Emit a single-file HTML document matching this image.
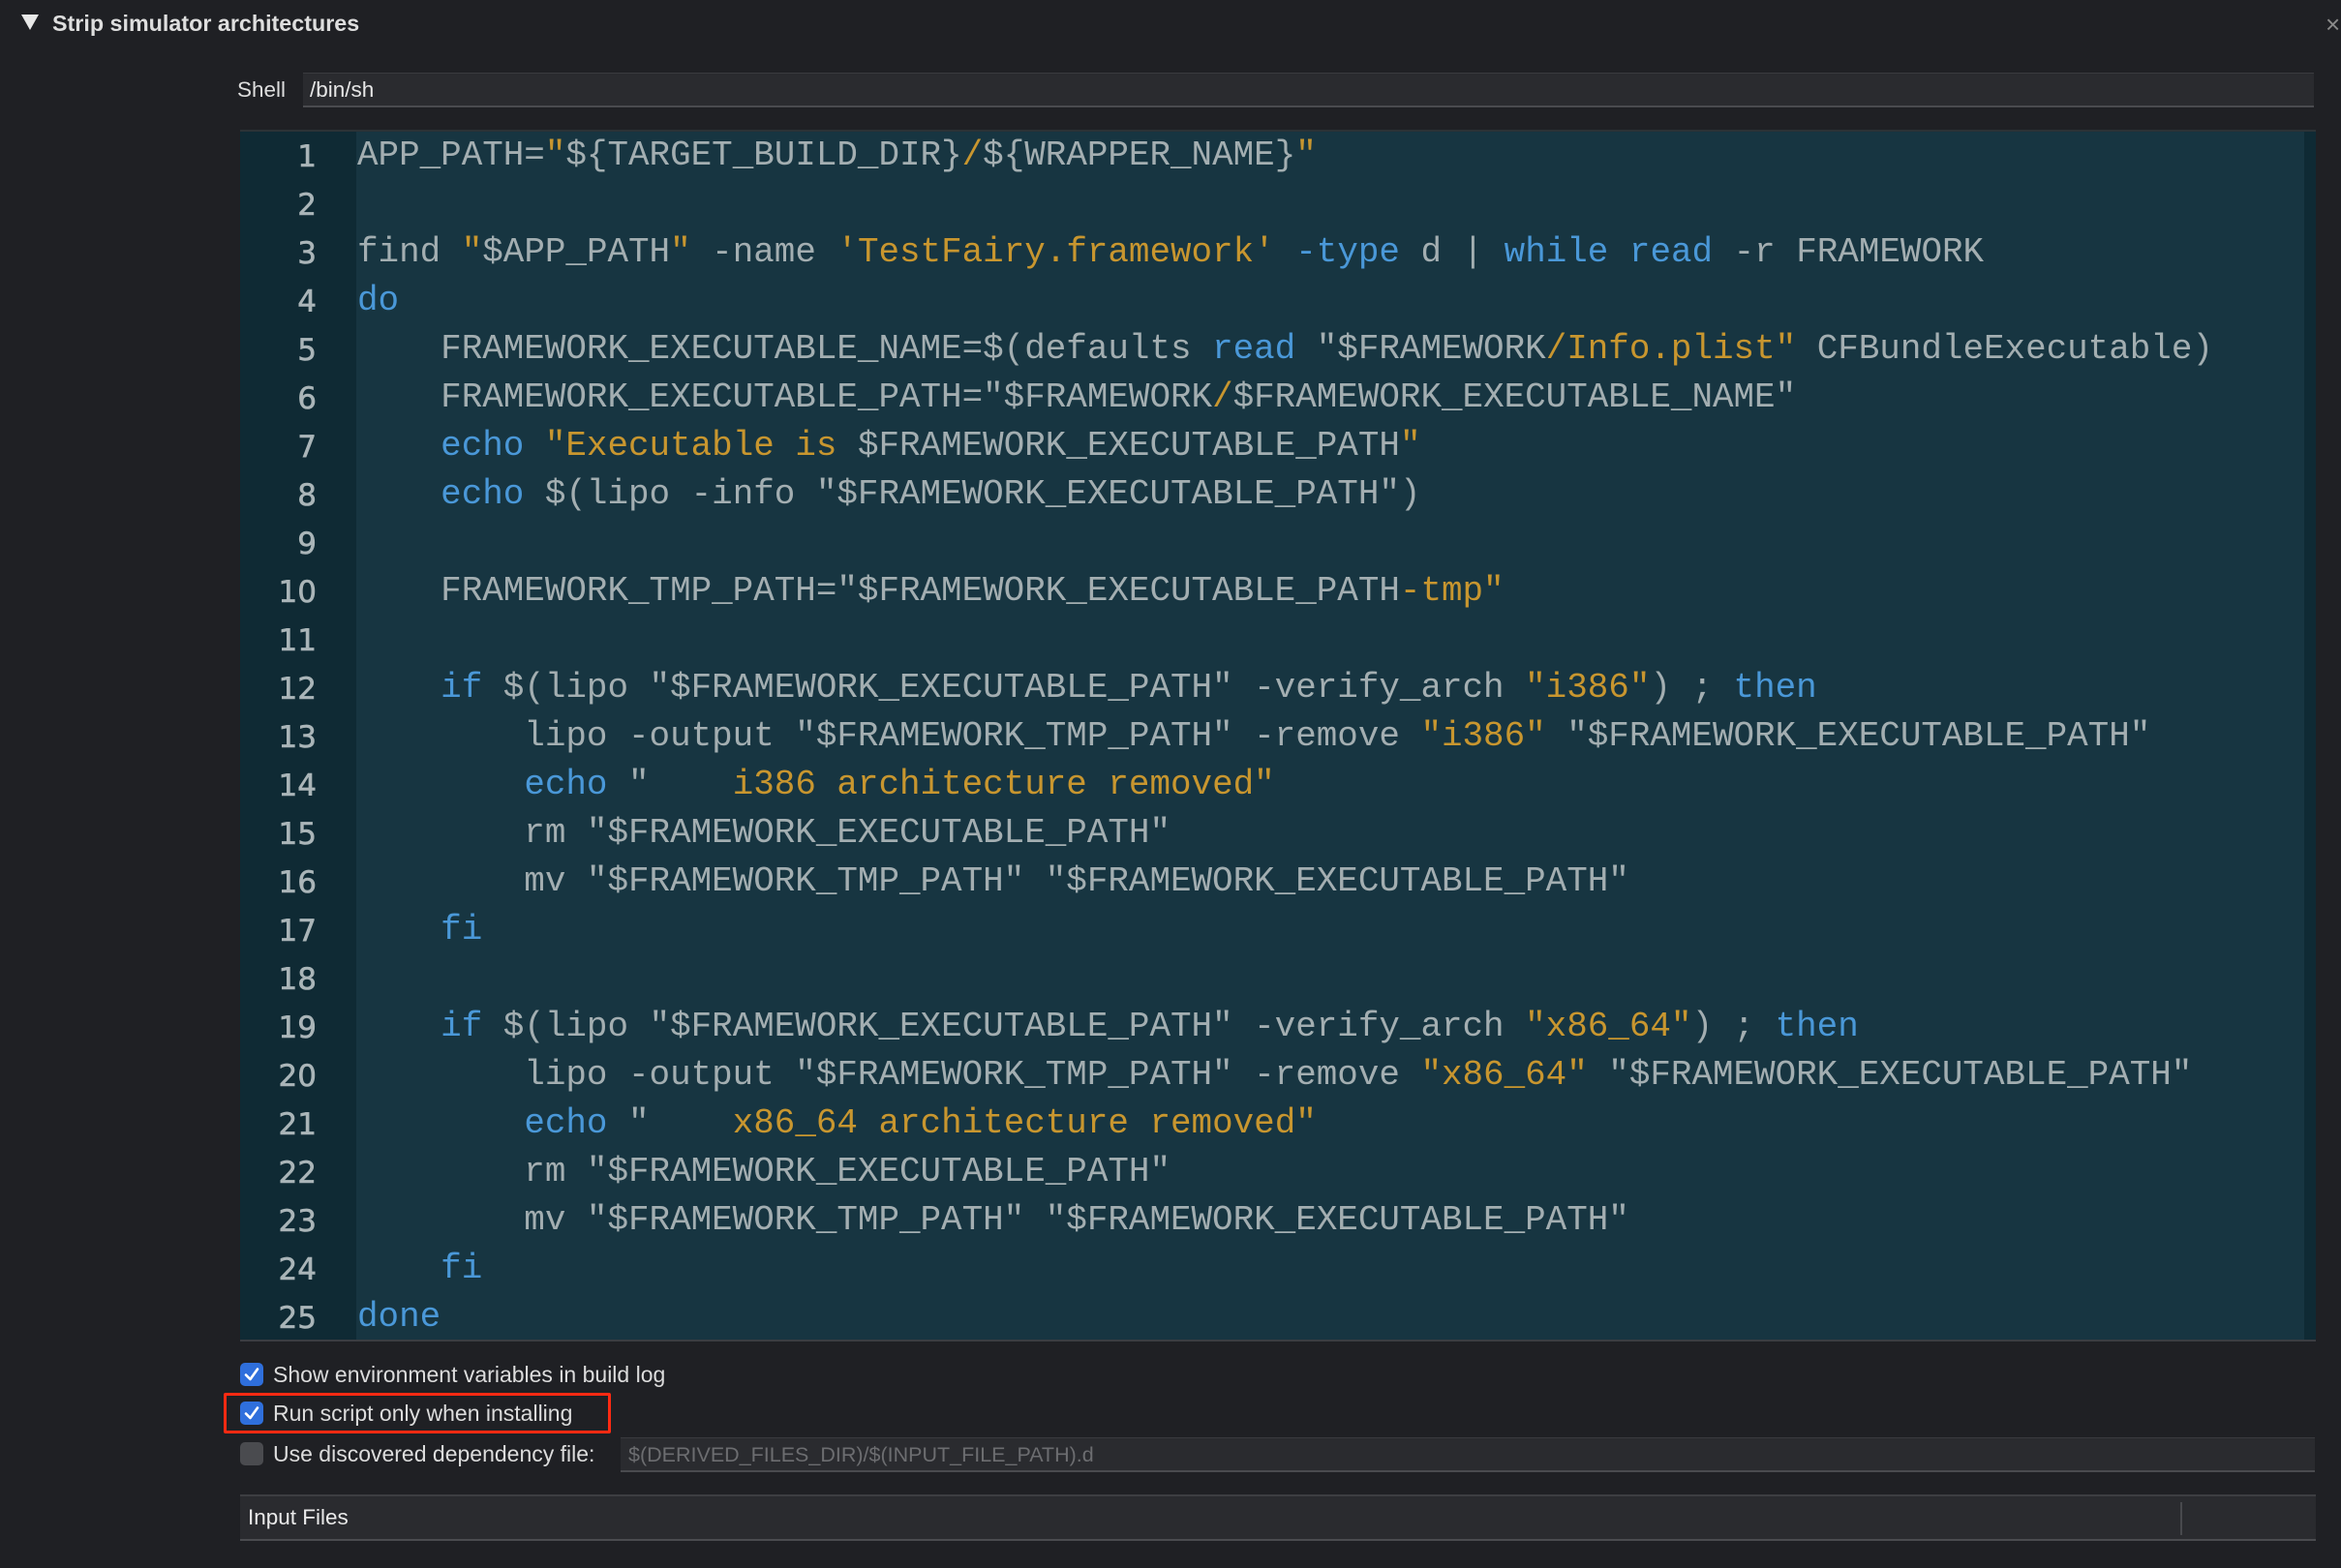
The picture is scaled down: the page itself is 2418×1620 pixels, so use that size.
<!DOCTYPE html>
<html><head><meta charset="utf-8"><style>
html,body{margin:0;padding:0;background:#1f2024;width:2418px;height:1620px;overflow:hidden;font-family:"Liberation Sans",sans-serif;}
.abs{position:absolute;}
.code{position:absolute;left:248px;top:134px;width:2144px;height:1248px;background:#173541;border-top:2px solid #2c3236;border-bottom:2px solid #3a3d42;}
.gut{position:absolute;left:0;top:0;width:120px;height:100%;background:#0f2a34;}
.strip{position:absolute;right:0;top:0;width:12px;height:100%;background:#0f2a34;}
.ln{position:absolute;left:0;width:79px;text-align:right;font-family:"DejaVu Sans","Liberation Sans",sans-serif;font-size:31px;color:#aab5b8;line-height:50px;-webkit-text-stroke:0.6px #aab5b8;}
.tx{position:absolute;left:121px;font-family:"Liberation Mono",monospace;font-size:35.9px;color:#a3aeb1;line-height:50px;white-space:pre;}
.k{color:#4a98d8}.s{color:#c8962f}
.cb{position:absolute;left:248px;width:24px;height:24px;border-radius:5px;background:#2f6fdc;}
.cb svg{position:absolute;left:3px;top:3px}
.lbl{position:absolute;left:282px;font-size:23px;color:#dcdcdc;line-height:26px;}
</style></head><body>
<div class="abs" style="left:22px;top:15px;width:0;height:0;border-left:9px solid transparent;border-right:9px solid transparent;border-top:16px solid #e8e8e8;"></div>
<div class="abs" style="left:54px;top:11px;font-size:23.3px;font-weight:bold;color:#dedede;">Strip simulator architectures</div>
<div class="abs" style="left:2402px;top:10px;font-size:26px;color:#8a8a8a;">×</div>
<div class="abs" style="left:245px;top:80px;font-size:22.5px;color:#dedede;">Shell</div>
<div class="abs" style="left:313px;top:75px;width:2077px;height:33px;background:#2a2b2f;border-top:1px solid #3a3b3f;border-bottom:2px solid #4a4b4f;"></div>
<div class="abs" style="left:320px;top:80px;font-size:22.5px;color:#e6e6e6;">/bin/sh</div>
<div class="code"><div class="gut"></div><div class="strip"></div>
<div class="ln" style="top:1px">1</div><div class="ln" style="top:51px">2</div><div class="ln" style="top:101px">3</div><div class="ln" style="top:151px">4</div><div class="ln" style="top:201px">5</div><div class="ln" style="top:251px">6</div><div class="ln" style="top:301px">7</div><div class="ln" style="top:351px">8</div><div class="ln" style="top:401px">9</div><div class="ln" style="top:451px">10</div><div class="ln" style="top:501px">11</div><div class="ln" style="top:551px">12</div><div class="ln" style="top:601px">13</div><div class="ln" style="top:651px">14</div><div class="ln" style="top:701px">15</div><div class="ln" style="top:751px">16</div><div class="ln" style="top:801px">17</div><div class="ln" style="top:851px">18</div><div class="ln" style="top:901px">19</div><div class="ln" style="top:951px">20</div><div class="ln" style="top:1001px">21</div><div class="ln" style="top:1051px">22</div><div class="ln" style="top:1101px">23</div><div class="ln" style="top:1151px">24</div><div class="ln" style="top:1201px">25</div>
<div class="tx" style="top:0px">APP_PATH=<span class="s">"</span>${TARGET_BUILD_DIR}<span class="s">/</span>${WRAPPER_NAME}<span class="s">"</span></div>
<div class="tx" style="top:100px">find <span class="s">"</span>$APP_PATH<span class="s">"</span> -name <span class="s">'TestFairy.framework'</span> <span class="k">-type</span> d | <span class="k">while</span> <span class="k">read</span> -r FRAMEWORK</div>
<div class="tx" style="top:150px"><span class="k">do</span></div>
<div class="tx" style="top:200px">    FRAMEWORK_EXECUTABLE_NAME=$(defaults <span class="k">read</span> "$FRAMEWORK<span class="s">/Info.plist"</span> CFBundleExecutable)</div>
<div class="tx" style="top:250px">    FRAMEWORK_EXECUTABLE_PATH="$FRAMEWORK<span class="s">/</span>$FRAMEWORK_EXECUTABLE_NAME"</div>
<div class="tx" style="top:300px">    <span class="k">echo</span> <span class="s">"Executable is </span>$FRAMEWORK_EXECUTABLE_PATH<span class="s">"</span></div>
<div class="tx" style="top:350px">    <span class="k">echo</span> $(lipo -info "$FRAMEWORK_EXECUTABLE_PATH")</div>
<div class="tx" style="top:450px">    FRAMEWORK_TMP_PATH="$FRAMEWORK_EXECUTABLE_PATH<span class="s">-tmp"</span></div>
<div class="tx" style="top:550px">    <span class="k">if</span> $(lipo "$FRAMEWORK_EXECUTABLE_PATH" -verify_arch <span class="s">"i386"</span>) ; <span class="k">then</span></div>
<div class="tx" style="top:600px">        lipo -output "$FRAMEWORK_TMP_PATH" -remove <span class="s">"i386"</span> "$FRAMEWORK_EXECUTABLE_PATH"</div>
<div class="tx" style="top:650px">        <span class="k">echo</span> "    <span class="s">i386 architecture removed"</span></div>
<div class="tx" style="top:700px">        rm "$FRAMEWORK_EXECUTABLE_PATH"</div>
<div class="tx" style="top:750px">        mv "$FRAMEWORK_TMP_PATH" "$FRAMEWORK_EXECUTABLE_PATH"</div>
<div class="tx" style="top:800px">    <span class="k">fi</span></div>
<div class="tx" style="top:900px">    <span class="k">if</span> $(lipo "$FRAMEWORK_EXECUTABLE_PATH" -verify_arch <span class="s">"x86_64"</span>) ; <span class="k">then</span></div>
<div class="tx" style="top:950px">        lipo -output "$FRAMEWORK_TMP_PATH" -remove <span class="s">"x86_64"</span> "$FRAMEWORK_EXECUTABLE_PATH"</div>
<div class="tx" style="top:1000px">        <span class="k">echo</span> "    <span class="s">x86_64 architecture removed"</span></div>
<div class="tx" style="top:1050px">        rm "$FRAMEWORK_EXECUTABLE_PATH"</div>
<div class="tx" style="top:1100px">        mv "$FRAMEWORK_TMP_PATH" "$FRAMEWORK_EXECUTABLE_PATH"</div>
<div class="tx" style="top:1150px">    <span class="k">fi</span></div>
<div class="tx" style="top:1200px"><span class="k">done</span></div>
</div>
<div class="cb" style="top:1408px"><svg width="18" height="18" viewBox="0 0 18 18"><path d="M3 9.5 L7.5 14 L15 3.5" stroke="#fff" stroke-width="2.6" fill="none" stroke-linecap="round" stroke-linejoin="round"/></svg></div>
<div class="lbl" style="top:1407px">Show environment variables in build log</div>
<div class="abs" style="left:231px;top:1439px;width:394px;height:36px;border:3px solid #ff2a12;border-radius:2px;"></div>
<div class="cb" style="top:1448px"><svg width="18" height="18" viewBox="0 0 18 18"><path d="M3 9.5 L7.5 14 L15 3.5" stroke="#fff" stroke-width="2.6" fill="none" stroke-linecap="round" stroke-linejoin="round"/></svg></div>
<div class="lbl" style="top:1447px">Run script only when installing</div>
<div class="cb" style="top:1490px;background:#4a4b4f;"></div>
<div class="lbl" style="top:1489px">Use discovered dependency file:</div>
<div class="abs" style="left:641px;top:1485px;width:1750px;height:33px;background:#2a2b2f;border-top:1px solid #3a3b3f;border-bottom:2px solid #4a4b4f;"></div>
<div class="abs" style="left:649px;top:1491px;font-size:21.5px;color:#6c6d70;">$(DERIVED_FILES_DIR)/$(INPUT_FILE_PATH).d</div>
<div class="abs" style="left:248px;top:1544px;width:2144px;height:44px;background:#2a2b2f;border-top:2px solid #3d3e42;border-bottom:2px solid #4a4b4f;"></div>
<div class="abs" style="left:2252px;top:1552px;width:2px;height:34px;background:#48494d;"></div>
<div class="abs" style="left:256px;top:1555px;font-size:22.5px;color:#eaeaea;">Input Files</div>
</body></html>
